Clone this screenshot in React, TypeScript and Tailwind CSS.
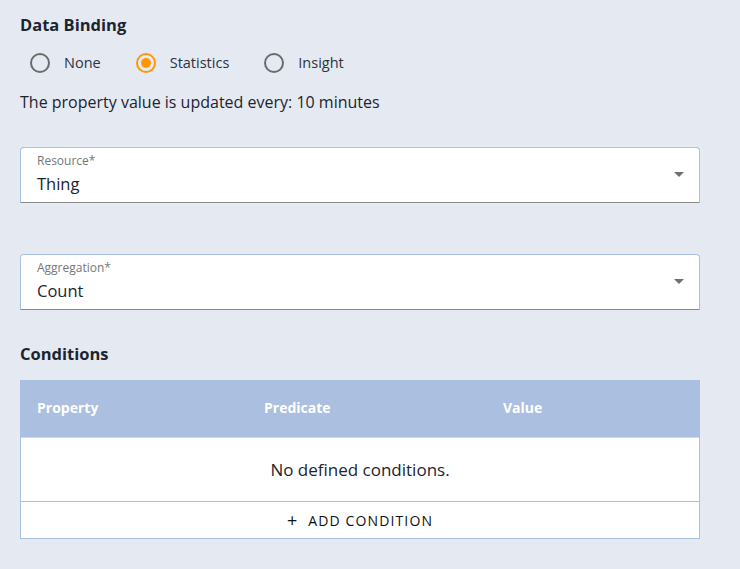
import React, { useState } from "react";

const options = ["None", "Statistics", "Insight"];

function Radio({ label, checked, onClick }: { label: string; checked: boolean; onClick: () => void }) {
  return (
    <button onClick={onClick} className="flex items-center gap-[14px] h-[24px]">
      <span
        className={
          "w-[20px] h-[20px] rounded-full border-2 flex items-center justify-center " +
          (checked ? "border-[#ff9800]" : "border-[#6b6b6b]")
        }
      >
        {checked && <span className="w-[10px] h-[10px] rounded-full bg-[#ff9800]" />}
      </span>
      <span className="text-[14.5px] text-[#2b3340]">{label}</span>
    </button>
  );
}

function SelectField({ label, value }: { label: string; value: string }) {
  return (
    <div className="relative h-[56px] bg-white rounded-t-[4px] border border-[#aac0e2] border-b-[#8a8a8a] pl-[16px] pt-[5px]">
      <div className="text-[12px] leading-[16px] text-[#777]">{label}</div>
      <div className="text-[16.5px] leading-[24px] text-[#1c2430] mt-[3px]">{value}</div>
      <svg className="absolute right-[15px] top-[24px]" width="10" height="5" viewBox="0 0 10 5">
        <path d="M0 0 L10 0 L5 5 Z" fill="#707070" />
      </svg>
    </div>
  );
}

export default function App() {
  const [mode, setMode] = useState("Statistics");

  return (
    <div
      className="w-[740px] h-[569px] bg-[#e5eaf2] px-[20px] pt-[14px]"
      style={{ fontFamily: '"Open Sans", "Noto Sans", sans-serif' }}
    >
      <div className="w-[680px]">
        {/* Data binding */}
        <h2 className="text-[16.5px] leading-[22px] font-bold text-[#1c2430]">Data Binding</h2>
        <div className="flex items-center gap-[35px] mt-[15px] pl-[10px]">
          {options.map((o) => (
            <Radio key={o} label={o} checked={mode === o} onClick={() => setMode(o)} />
          ))}
        </div>
        <p className="mt-[16px] text-[16px] leading-[22px] text-[#1c2430]">
          The property value is updated every: 10 minutes
        </p>

        {/* Selects */}
        <div className="mt-[34px]">
          <SelectField label="Resource*" value="Thing" />
        </div>
        <div className="mt-[51px]">
          <SelectField label="Aggregation*" value="Count" />
        </div>

        {/* Conditions */}
        <h2 className="mt-[33px] text-[16.5px] leading-[22px] font-bold text-[#1c2430]">Conditions</h2>
        <div className="mt-[15px] border border-[#aac0e2] bg-white">
          <div className="grid grid-cols-[227px_239px_1fr] h-[56px] items-center bg-[#abc0e0] px-[16px] pb-[3px] text-[14px] font-bold text-white">
            <div>Property</div>
            <div>Predicate</div>
            <div>Value</div>
          </div>
          <div className="h-[64px] flex items-center justify-center text-[17px] text-[#1c2430] border-t border-[#cfdaea]">
            No defined conditions.
          </div>
          <button className="w-full h-[37px] flex items-center justify-center gap-[10px] border-t border-[#aac0e2] text-[14px] tracking-[0.08em] text-[#111]">
            <span className="text-[18px] leading-none">+</span>
            <span>ADD CONDITION</span>
          </button>
        </div>
      </div>
    </div>
  );
}
